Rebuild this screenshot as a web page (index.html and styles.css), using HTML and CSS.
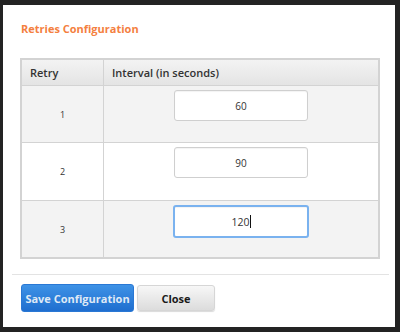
FILE: index.html
```html
<!DOCTYPE html>
<html>
<head>
<meta charset="utf-8">
<link rel="stylesheet" href="styles.css">
</head>
<body>
<div class="modal">
  <h3 class="title">Retries Configuration</h3>
  <div class="grid">
    <div class="row head">
      <div class="cell c1">Retry</div>
      <div class="cell c2">Interval (in seconds)</div>
    </div>
    <div class="row odd">
      <div class="cell c1 num">1</div>
      <div class="cell c2 val"><div class="field">60</div></div>
    </div>
    <div class="row">
      <div class="cell c1 num">2</div>
      <div class="cell c2 val"><div class="field">90</div></div>
    </div>
    <div class="row odd last">
      <div class="cell c1 num">3</div>
      <div class="cell c2 val"><div class="field focus">120<span class="caret"></span></div></div>
    </div>
  </div>
  <div class="footer">
    <button class="btn primary">Save Configuration</button>
    <button class="btn plain">Close</button>
  </div>
</div>
</body>
</html>
```

FILE: styles.css
```css
html, body {
  margin: 0;
  padding: 0;
}
body {
  background: #232323;
  width: 400px;
  height: 332px;
  padding: 5px 0 0 3px;
  box-sizing: border-box;
  font-family: "Open Sans", "Liberation Sans", sans-serif;
}
.modal {
  width: 392px;
  height: 322px;
  background: #fff;
  box-sizing: border-box;
  padding-top: 16px;
}
.title {
  margin: 0 0 22px 18px;
  font-size: 11px;
  line-height: 15px;
  font-weight: 700;
  color: #f4803f;
}
.grid {
  margin-left: 17px;
  width: 360px;
  box-sizing: border-box;
  border: 2px solid #d3d3d3;
}
.row {
  display: grid;
  grid-template-columns: 82px 1fr;
  border-bottom: 1px solid #d3d3d3;
  background: #fff;
}
.row.last {
  border-bottom: none;
}
.row.odd {
  background: #f3f3f3;
}
.row.head {
  height: 25px;
  background: linear-gradient(#f3f3f3, #e4e4e4);
}
.cell.c1 {
  border-right: 1px solid #d3d3d3;
}
.head .cell {
  font-size: 11px;
  font-weight: 600;
  color: #333;
  line-height: 25px;
  padding-left: 8px;
}
.row.odd, .row:not(.head) {
  height: 56px;
}
.row:nth-child(3) { height: 57px; }
.row.last { height: 56px; }
.num {
  display: flex;
  align-items: center;
  justify-content: center;
  font-size: 9px;
  color: #333;
}
.val {
  display: flex;
  justify-content: center;
  align-items: flex-start;
  padding-top: 4px;
}
.field {
  width: 134px;
  height: 31px;
  box-sizing: border-box;
  border: 1px solid #cfcfcf;
  border-radius: 3px;
  background: #fff;
  display: flex;
  align-items: center;
  justify-content: center;
  font-size: 10px;
  color: #333;
  box-shadow: inset 0 1px 1px rgba(0,0,0,0.05);
}
.field.focus {
  width: 136px;
  height: 33px;
  border: 2px solid #7ab2ef;
  font-size: 10.5px;
}
.caret {
  display: inline-block;
  width: 1px;
  height: 13px;
  background: #111;
  margin-left: 0;
}
.footer {
  margin: 15px 6px 0 9px;
  border-top: 1px solid #e3e3e3;
  padding: 9px 0 0 9px;
  display: flex;
  align-items: center;
  gap: 3px;
}
.btn {
  font-family: "Open Sans", "Liberation Sans", sans-serif;
  font-size: 11px;
  font-weight: 700;
  border-radius: 3px;
  padding: 0;
  cursor: pointer;
}
.btn.primary {
  width: 113px;
  height: 28px;
  border: 1px solid #2a78d4;
  color: #dfe9f6;
  background: linear-gradient(#3e92e6, #1f6ecf);
}
.btn.plain {
  width: 78px;
  height: 26px;
  border: 1px solid #d6d6d6;
  color: #1a1a1a;
  background: linear-gradient(#f7f7f7, #dcdcdc);
  box-shadow: 0 1px 1px rgba(0,0,0,0.15);
}
```
